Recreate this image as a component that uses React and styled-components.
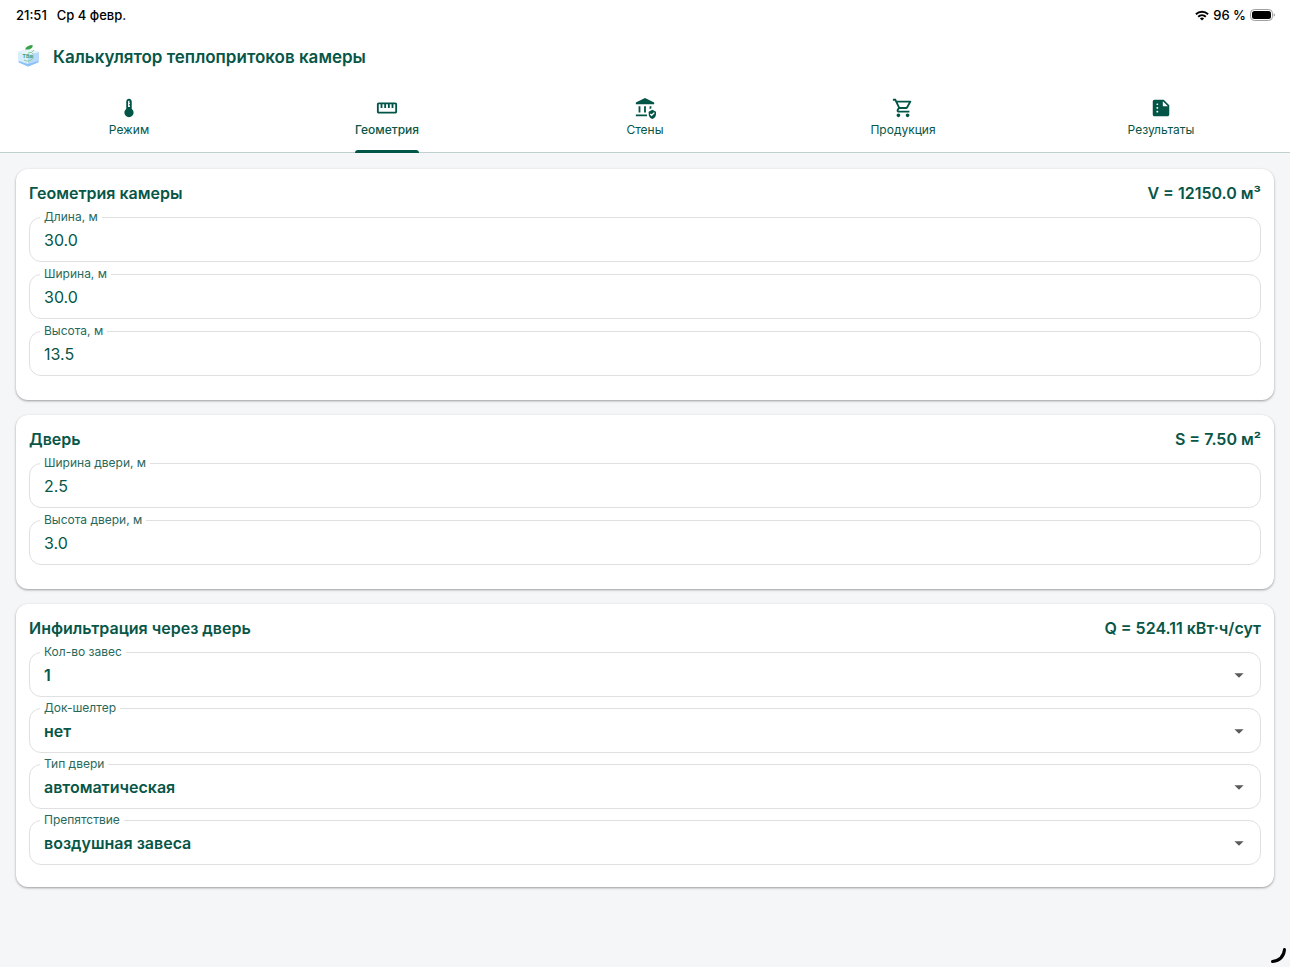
import React, { useState } from "react";
import styled, { createGlobalStyle } from "styled-components";
import {
  MdDeviceThermostat,
  MdStraighten,
  MdAssuredWorkload,
  MdOutlineShoppingCart,
  MdSummarize,
  MdArrowDropDown,
} from "react-icons/md";

const GlobalStyle = createGlobalStyle`
  *, *::before, *::after { box-sizing: border-box; }
  body {
    margin: 0;
    background: #f5f6f8;
    color: #075647;
    font-family: Inter, "Noto Sans", sans-serif;
  }
  button, input, select { font: inherit; color: inherit; }
`;

const Page = styled.div`
  min-height: 100vh;
  display: flex;
  flex-direction: column;
`;

const TopArea = styled.header`
  background: #fff;
  border-bottom: 1px solid #bfd0cf;
`;

const StatusBar = styled.div`
  display: flex;
  justify-content: space-between;
  align-items: center;
  height: 30px;
  padding: 0 15px 0 16px;
  color: #000;
  font-size: 13px;
  font-weight: 500;
`;

const StatusGroup = styled.div`
  display: flex;
  align-items: center;
  gap: ${(p) => p.$gap}px;
`;

const AppBar = styled.div`
  display: flex;
  align-items: center;
  gap: 12px;
  height: 52px;
  padding: 2px 16px 0;
`;

const AppTitle = styled.h1`
  margin: 0;
  font-size: 17px;
  line-height: 24px;
  font-weight: 600;
`;

const Tabs = styled.nav`
  display: flex;
`;

const Tab = styled.button`
  flex: 1;
  display: flex;
  justify-content: center;
  height: 70px;
  padding: 15px 0 0;
  border: 0;
  background: none;
  cursor: pointer;
`;

const TabContent = styled.span`
  position: relative;
  display: flex;
  flex-direction: column;
  align-items: center;
  gap: 3px;
  font-size: 12px;
  line-height: 16px;
  font-weight: ${(p) => (p.$active ? 500 : 400)};

  svg { color: #005546; }

  &::after {
    content: "";
    display: ${(p) => (p.$active ? "block" : "none")};
    position: absolute;
    left: 0;
    right: 0;
    bottom: -1px;
    height: 3px;
    border-radius: 3px 3px 0 0;
    background: #005546;
  }
`;

const Main = styled.main`
  display: flex;
  flex-direction: column;
  gap: 15px;
  padding: 16px;
`;

const Card = styled.section`
  padding: 12px 13px ${(p) => (p.$dense ? 22 : 24)}px;
  border-radius: 12px;
  background: #fff;
  box-shadow: 0 1px 3px rgba(0, 0, 0, 0.22), 0 1px 2px rgba(0, 0, 0, 0.18);
`;

const CardHeader = styled.div`
  display: flex;
  justify-content: space-between;
  margin-bottom: 12px;
  font-size: 16px;
  line-height: 24px;
  font-weight: 600;
`;

const CardTitle = styled.h2`
  margin: 0;
  font-size: inherit;
  font-weight: inherit;
`;

const CardValue = styled.output`
  text-align: right;
`;

const Fields = styled.div`
  display: flex;
  flex-direction: column;
  gap: ${(p) => (p.$dense ? 11 : 12)}px;
`;

const Field = styled.div`
  position: relative;
  height: 45px;
`;

const FieldLabel = styled.label`
  position: absolute;
  top: -8px;
  left: 11px;
  padding: 0 4px;
  background: #fff;
  color: #28695c;
  font-size: 12px;
  line-height: 16px;
`;

const TextInput = styled.input`
  display: block;
  width: 100%;
  height: 100%;
  padding: 0 14px;
  border: 1px solid #e0e0e0;
  border-radius: 12px;
  background: #fff;
  font-size: 16px;
`;

const SelectInput = styled.select`
  appearance: none;
  display: block;
  width: 100%;
  height: 100%;
  padding: 0 40px 0 14px;
  border: 1px solid #e0e0e0;
  border-radius: 12px;
  background: #fff;
  font-size: 16px;
  font-weight: 600;
`;

const SelectArrow = styled(MdArrowDropDown)`
  position: absolute;
  top: 12px;
  right: 11px;
  color: #5a5a5a;
  pointer-events: none;
`;

const CornerHandle = styled.svg`
  position: fixed;
  right: 3px;
  bottom: 3px;
`;

function Logo() {
  return (
    <svg width="25" height="25" viewBox="0 0 25 25" aria-hidden="true">
      <path d="M2 7 L12 4 L23 7 L23 17 L12 21.500 L2 17Z" fill="#c5e3fb" />
      <path d="M2 7 L12 10 L12 21.500 L2 17Z" fill="#d8edfe" />
      <path d="M12 10 L23 7 L23 17 L12 21.500Z" fill="#b7dafa" />
      <path d="M3 16 L12 19 L22 16 V17.500 L12 21.500 L3 17.500Z" fill="#8ac1f7" />
      <path d="M2 7 L12 4 L23 7 L12 10Z" fill="#e6f5fb" />
      <path d="M9 4.500 C10 1.500 13 0 16.500 0 C17.500 3 14 5 10 4.500Z" fill="#3ca34a" />
      <path d="M12 8 Q17 8 18 5 M8 15 Q13 18 17 13" fill="none" stroke="#86cf8c" strokeWidth="1" />
      <text x="12" y="13" textAnchor="middle" fontSize="5" fontWeight="700" fill="#3b9c72">
        TBai
      </text>
    </svg>
  );
}

function WifiIcon() {
  return (
    <svg width="14" height="11" viewBox="0 0 14 11" fill="none" stroke="#000" strokeWidth="1.9" aria-hidden="true">
      <path d="M0.900 4.200 A8.800 8.800 0 0 1 13.100 4.200" />
      <path d="M3.200 6.700 A5.500 5.500 0 0 1 10.800 6.700" />
      <path d="M7 10.600 L4.900 8.500 A3 3 0 0 1 9.100 8.500Z" fill="#000" stroke="none" />
    </svg>
  );
}

function BatteryIcon() {
  return (
    <svg width="25" height="12" viewBox="0 0 25 12" aria-hidden="true">
      <rect x="0.500" y="0.500" width="22" height="11" rx="3.800" fill="none" stroke="#a0a0a0" />
      <rect x="2" y="2" width="19" height="8" rx="2.500" fill="#000" />
      <path d="M23.700 4.200 Q25 4.800 25 6 Q25 7.200 23.700 7.800Z" fill="#a0a0a0" />
    </svg>
  );
}

function NumberField({ id, label, initial }) {
  const [value, setValue] = useState(initial);
  return (
    <Field>
      <TextInput id={id} inputMode="decimal" value={value} onChange={(e) => setValue(e.target.value)} />
      <FieldLabel htmlFor={id}>{label}</FieldLabel>
    </Field>
  );
}

function SelectField({ id, label, option }) {
  return (
    <Field>
      <SelectInput id={id} defaultValue={option}>
        <option value={option}>{option}</option>
      </SelectInput>
      <FieldLabel htmlFor={id}>{label}</FieldLabel>
      <SelectArrow size={22} />
    </Field>
  );
}

function Panel({ title, value, dense, children }) {
  return (
    <Card $dense={dense}>
      <CardHeader>
        <CardTitle>{title}</CardTitle>
        <CardValue>{value}</CardValue>
      </CardHeader>
      <Fields $dense={dense}>{children}</Fields>
    </Card>
  );
}

const tabs = [
  { label: "Режим", Icon: MdDeviceThermostat },
  { label: "Геометрия", Icon: MdStraighten },
  { label: "Стены", Icon: MdAssuredWorkload },
  { label: "Продукция", Icon: MdOutlineShoppingCart },
  { label: "Результаты", Icon: MdSummarize },
];

export default function App() {
  const [active, setActive] = useState("Геометрия");
  return (
    <Page>
      <GlobalStyle />
      <TopArea>
        <StatusBar>
          <StatusGroup $gap={10}>
            <span>21:51</span>
            <span>Ср 4 февр.</span>
          </StatusGroup>
          <StatusGroup $gap={4}>
            <WifiIcon />
            <span>96 %</span>
            <BatteryIcon />
          </StatusGroup>
        </StatusBar>
        <AppBar>
          <Logo />
          <AppTitle>Калькулятор теплопритоков камеры</AppTitle>
        </AppBar>
        <Tabs>
          {tabs.map(({ label, Icon }) => (
            <Tab key={label} type="button" onClick={() => setActive(label)}>
              <TabContent $active={label === active}>
                <Icon size={22} />
                {label}
              </TabContent>
            </Tab>
          ))}
        </Tabs>
      </TopArea>
      <Main>
        <Panel title="Геометрия камеры" value="V = 12150.0 м³">
          <NumberField id="length" label="Длина, м" initial="30.0" />
          <NumberField id="width" label="Ширина, м" initial="30.0" />
          <NumberField id="height" label="Высота, м" initial="13.5" />
        </Panel>
        <Panel title="Дверь" value="S = 7.50 м²">
          <NumberField id="door-width" label="Ширина двери, м" initial="2.5" />
          <NumberField id="door-height" label="Высота двери, м" initial="3.0" />
        </Panel>
        <Panel title="Инфильтрация через дверь" value="Q = 524.11 кВт·ч/сут" dense>
          <SelectField id="curtains" label="Кол-во завес" option="1" />
          <SelectField id="dock" label="Док-шелтер" option="нет" />
          <SelectField id="door-type" label="Тип двери" option="автоматическая" />
          <SelectField id="barrier" label="Препятствие" option="воздушная завеса" />
        </Panel>
      </Main>
      <CornerHandle width="17" height="17" viewBox="0 0 17 17" aria-hidden="true">
        <path d="M14.500 2.500 Q13.500 13 2.500 14.500" fill="none" stroke="#000" strokeWidth="3" strokeLinecap="round" />
      </CornerHandle>
    </Page>
  );
}
